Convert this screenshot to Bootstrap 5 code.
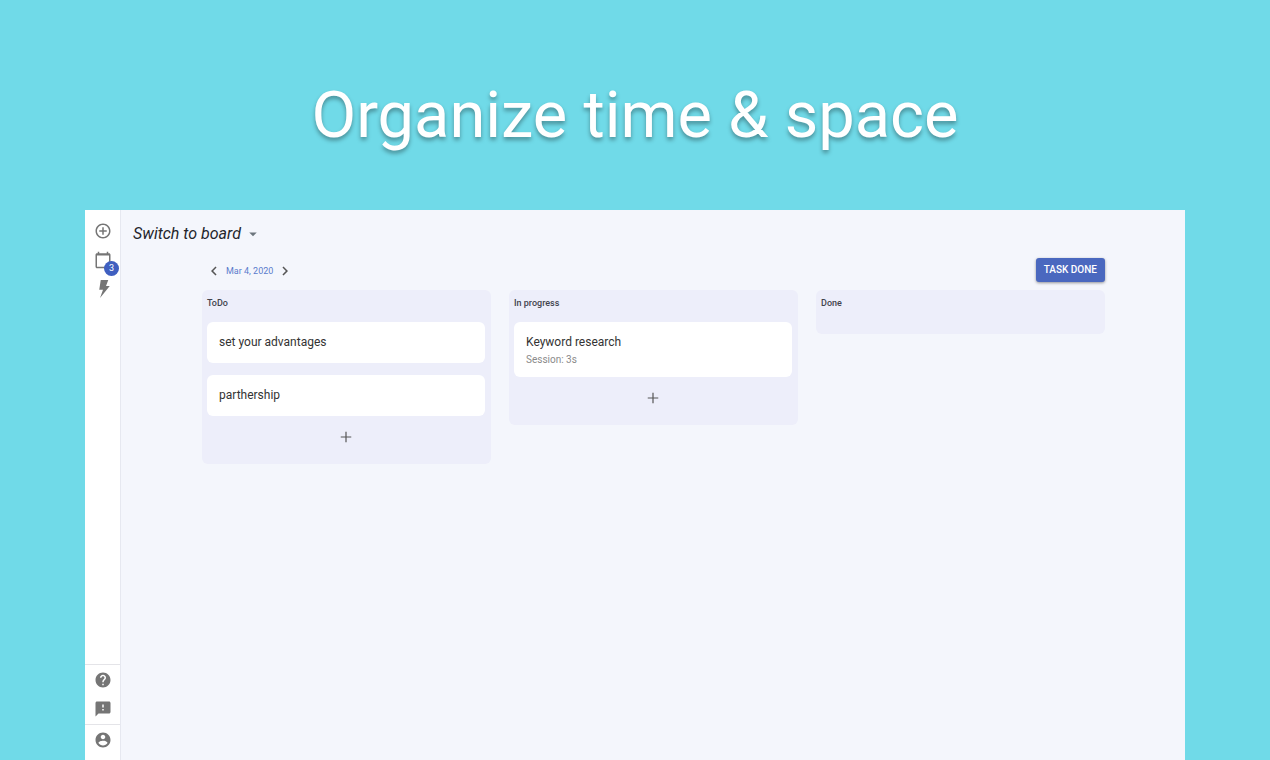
<!DOCTYPE html>
<html lang="en">
<head>
<meta charset="utf-8">
<meta name="viewport" content="width=device-width, initial-scale=1">
<title>Organize time &amp; space</title>
<link href="https://cdn.jsdelivr.net/npm/bootstrap@5.3.0/dist/css/bootstrap.min.css" rel="stylesheet">
<style>
  body { background: #70dae8; font-family: Roboto, sans-serif; color: #333; }
  svg { display: block; fill: currentColor; }
  .hero-title { font-size: 65px; line-height: 78px; font-weight: 400; padding: 76px 0 56px; color: #fff; text-shadow: 0 3px 4px rgba(0, 0, 0, .35); }
  .app { width: 100%; max-width: 1100px; background: #f4f6fc; }
  .side { width: 36px; background: #fff; border-right: 1px solid #e6e8f0; color: #757575; }
  .side .btn { color: #757575; line-height: 1; }
  .side-top { padding-top: 12px; gap: 11px; }
  .side-help { padding: 6px 0; gap: 11px; border-top: 1px solid #e4e4e8; }
  .side-user { padding: 6px 0 11px; border-top: 1px solid #e4e4e8; }
  .count { left: 19px; top: 10px; width: 15px; height: 15px; font-size: 9px; line-height: 15px; background: #3f5fc0; }
  .switcher { padding: 12px 12px 0; }
  .switcher .btn { font-size: 16px; line-height: 24px; color: #24252c; gap: 3px; }
  .board { padding: 12px 80px 0 81px; }
  .board-bar { margin-bottom: 8px; }
  .day { padding: 2px 0 0 3px; gap: 3px; color: #5b7ccc; font-size: 9px; line-height: 18px; }
  .day .btn { color: #555; }
  .btn-task { background: #4a68bf; color: #fff; font-size: 10px; line-height: 14px; font-weight: 500; padding: 5px 8px; border-radius: 3px; box-shadow: 0 1px 3px rgba(0, 0, 0, .4); }
  .btn-task:hover { background: #3d59aa; color: #fff; }
  .lanes { display: grid; grid-template-columns: repeat(3, 1fr); gap: 18px; }
  .lane { background: #edeefa; border-radius: 6px; padding: 6px 6px 18px 5px; }
  .lane h2 { font-size: 9px; line-height: 14px; font-weight: 500; color: #42434d; margin: 0; }
  .lane-items { margin-top: 12px; gap: 12px; }
  .task { background: #fff; border-radius: 6px; padding: 12px; font-size: 12px; line-height: 17px; }
  .task:has(small) { padding-bottom: 8px; }
  .task small { font-size: 10px; line-height: 18px; color: #8a8a8a; }
  .add { color: #555; }
  .lane-short { padding-bottom: 24px; }
</style>
</head>
<body class="d-flex flex-column min-vh-100">
<h1 class="hero-title text-center m-0">Organize time &amp; space</h1>
<div class="app d-flex flex-grow-1 mx-auto">
  <nav class="side d-flex flex-column flex-shrink-0" aria-label="Main">
    <div class="side-top d-flex flex-column align-items-center flex-grow-1">
      <button class="btn border-0 p-0" aria-label="Add"><svg width="18" height="18" viewBox="0 0 24 24"><path d="M13 7h-2v4H7v2h4v4h2v-4h4v-2h-4V7zm-1-5C6.480 2 2 6.480 2 12s4.480 10 10 10 10-4.480 10-10S17.520 2 12 2zm0 18c-4.410 0-8-3.590-8-8s3.590-8 8-8 8 3.590 8 8-3.590 8-8 8z"/></svg></button>
      <button class="btn border-0 p-0 position-relative w-100" aria-label="Calendar"><svg class="mx-auto" width="18" height="18" viewBox="0 0 24 24"><path d="M20 3h-1V1h-2v2H7V1H5v2H4c-1.100 0-2 .9-2 2v16c0 1.100.9 2 2 2h16c1.100 0 2-.9 2-2V5c0-1.100-.9-2-2-2zm0 18H4V6h16v15z"/></svg><span class="count position-absolute rounded-circle text-white">3</span></button>
      <button class="btn border-0 p-0" aria-label="Activity"><svg width="18" height="18" viewBox="0 0 24 24"><path d="M9 0h10l-3 8h5L8 24l4-11H7z"/></svg></button>
    </div>
    <div class="side-help d-flex flex-column align-items-center">
      <button class="btn border-0 p-0" aria-label="Help"><svg width="18" height="18" viewBox="0 0 24 24"><path d="M12 2C6.480 2 2 6.480 2 12s4.480 10 10 10 10-4.480 10-10S17.520 2 12 2zm1 17h-2v-2h2v2zm2.070-7.750l-.9.920C13.450 12.900 13 13.500 13 15h-2v-.5c0-1.100.450-2.100 1.170-2.830l1.240-1.260c.370-.360.590-.860.590-1.410 0-1.100-.9-2-2-2s-2 .9-2 2H8c0-2.210 1.790-4 4-4s4 1.790 4 4c0 .880-.360 1.680-.930 2.250z"/></svg></button>
      <button class="btn border-0 p-0" aria-label="Feedback"><svg width="18" height="18" viewBox="0 0 24 24"><path d="M20 2H4c-1.100 0-2 .9-2 2v18l4-4h14c1.100 0 2-.9 2-2V4c0-1.100-.9-2-2-2zm-7 12h-2v-2h2v2zm0-4h-2V6h2v4z"/></svg></button>
    </div>
    <div class="side-user d-flex flex-column align-items-center">
      <button class="btn border-0 p-0" aria-label="Account"><svg width="18" height="18" viewBox="0 0 24 24"><path d="M12 2C6.480 2 2 6.480 2 12s4.480 10 10 10 10-4.480 10-10S17.520 2 12 2zm0 3c1.660 0 3 1.340 3 3s-1.340 3-3 3-3-1.340-3-3 1.340-3 3-3zm0 14.200c-2.500 0-4.710-1.280-6-3.220.030-1.990 4-3.080 6-3.080 1.990 0 5.970 1.090 6 3.080-1.290 1.940-3.500 3.220-6 3.220z"/></svg></button>
    </div>
  </nav>
  <main class="flex-grow-1">
    <div class="switcher">
      <button class="btn border-0 p-0 d-flex align-items-center fst-italic" aria-haspopup="listbox">Switch to board <svg class="text-secondary" width="18" height="18" viewBox="0 0 24 24"><path d="M7 10l5 5 5-5z"/></svg></button>
    </div>
    <div class="board">
      <div class="board-bar d-flex justify-content-between align-items-center">
        <div class="day d-flex align-items-center">
          <button class="btn border-0 p-0" aria-label="Previous day"><svg width="18" height="18" viewBox="0 0 24 24"><path d="M15.410 7.410L14 6l-6 6 6 6 1.410-1.410L10.830 12z"/></svg></button>
          <span>Mar 4, 2020</span>
          <button class="btn border-0 p-0" aria-label="Next day"><svg width="18" height="18" viewBox="0 0 24 24"><path d="M10 6L8.590 7.410 13.170 12l-4.580 4.590L10 18l6-6z"/></svg></button>
        </div>
        <button class="btn btn-task border-0">TASK DONE</button>
      </div>
      <div class="lanes align-items-start">
        <section class="lane">
          <h2>ToDo</h2>
          <div class="lane-items d-flex flex-column">
            <div class="task">set your advantages</div>
            <div class="task">parthership</div>
            <button class="add btn border-0 p-0 mx-auto" aria-label="Add to ToDo"><svg width="18" height="18" viewBox="0 0 24 24"><path d="M19 12.800h-6.200V19h-1.600v-6.200H5v-1.600h6.200V5h1.600v6.200H19z"/></svg></button>
          </div>
        </section>
        <section class="lane">
          <h2>In progress</h2>
          <div class="lane-items d-flex flex-column">
            <div class="task">Keyword research<small class="d-block">Session: 3s</small></div>
            <button class="add btn border-0 p-0 mx-auto" aria-label="Add to In progress"><svg width="18" height="18" viewBox="0 0 24 24"><path d="M19 12.800h-6.200V19h-1.600v-6.200H5v-1.600h6.200V5h1.600v6.200H19z"/></svg></button>
          </div>
        </section>
        <section class="lane lane-short">
          <h2>Done</h2>
        </section>
      </div>
    </div>
  </main>
</div>
<script src="https://cdn.jsdelivr.net/npm/bootstrap@5.3.0/dist/js/bootstrap.bundle.min.js"></script>
</body>
</html>
